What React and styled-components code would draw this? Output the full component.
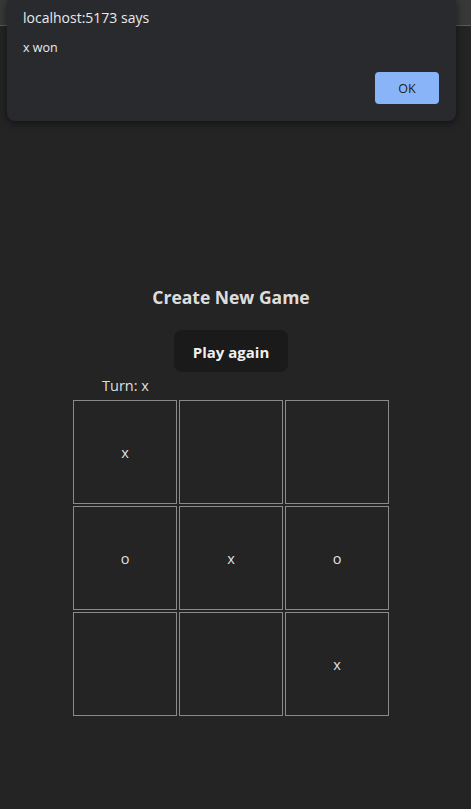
import React from "react";
import styled, { createGlobalStyle } from "styled-components";

const Global = createGlobalStyle`
  html, body { margin: 0; padding: 0; background: #242424; }
  body {
    font-family: "Open Sans", "Noto Sans", sans-serif;
    color: rgba(255,255,255,0.87);
    min-height: 809px;
  }
`;

const Page = styled.div`
  position: relative;
  min-height: 809px;
`;

const BrowserStrip = styled.div`
  height: 25px;
  background: #383838;
  border-bottom: 1px solid #5b5b5b;
`;

const Dialog = styled.div`
  position: absolute;
  top: 0;
  left: 7px;
  width: 449px;
  height: 121px;
  box-sizing: border-box;
  background: #292a2d;
  border-radius: 0 0 8px 8px;
  box-shadow: 0 2px 8px rgba(0,0,0,0.55);
  padding: 8px 17px 0 16px;
  display: flex;
  flex-direction: column;
  font-family: "Open Sans", "Noto Sans", sans-serif;
  color: #e8eaed;
`;

const DialogTitle = styled.div`
  font-size: 14px;
  line-height: 20px;
`;

const DialogMessage = styled.div`
  font-size: 12.5px;
  line-height: 18px;
  margin-top: 11px;
`;

const DialogActions = styled.div`
  display: flex;
  justify-content: flex-end;
  margin-top: 15px;
`;

const OkButton = styled.button`
  width: 64px;
  height: 32px;
  border: none;
  border-radius: 4px;
  background: #8ab4f8;
  color: #202124;
  font-family: inherit;
  font-size: 12.5px;
  padding: 0;
`;

const Main = styled.main`
  display: flex;
  flex-direction: column;
  align-items: center;
  padding-right: 9px;
`;

const Title = styled.h1`
  margin: 261px 0 0;
  font-size: 17.5px;
  line-height: 20px;
  font-weight: 700;
`;

const PlayButton = styled.button`
  margin-top: 23px;
  height: 42px;
  width: 114px;
  border: 1px solid transparent;
  border-radius: 8px;
  background: #1a1a1a;
  color: rgba(255,255,255,0.95);
  font-family: inherit;
  font-size: 15px;
  font-weight: 700;
  padding: 1px 0 0;
`;

const Board = styled.div`
  margin-top: 4px;
  display: flex;
  flex-direction: column;
`;

const Turn = styled.div`
  margin-left: 29px;
  font-size: 14.5px;
  line-height: 20px;
  margin-bottom: 4px;
`;

const Grid = styled.div`
  display: grid;
  grid-template-columns: repeat(3, 104px);
  grid-auto-rows: 104px;
  gap: 2px;
`;

const Cell = styled.div`
  box-sizing: border-box;
  border: 1px solid #8a8a8a;
  display: flex;
  align-items: center;
  justify-content: center;
  font-size: 14.5px;
`;

const cells = ["x", "", "", "o", "x", "o", "", "", "x"];

export default function App() {
  return (
    <Page>
      <Global />
      <BrowserStrip />
      <Main>
        <Title>Create New Game</Title>
        <PlayButton>Play again</PlayButton>
        <Board>
          <Turn>Turn: x</Turn>
          <Grid>
            {cells.map((c, i) => (
              <Cell key={i}>{c}</Cell>
            ))}
          </Grid>
        </Board>
      </Main>
      <Dialog>
        <DialogTitle>localhost:5173 says</DialogTitle>
        <DialogMessage>x won</DialogMessage>
        <DialogActions>
          <OkButton>OK</OkButton>
        </DialogActions>
      </Dialog>
    </Page>
  );
}
